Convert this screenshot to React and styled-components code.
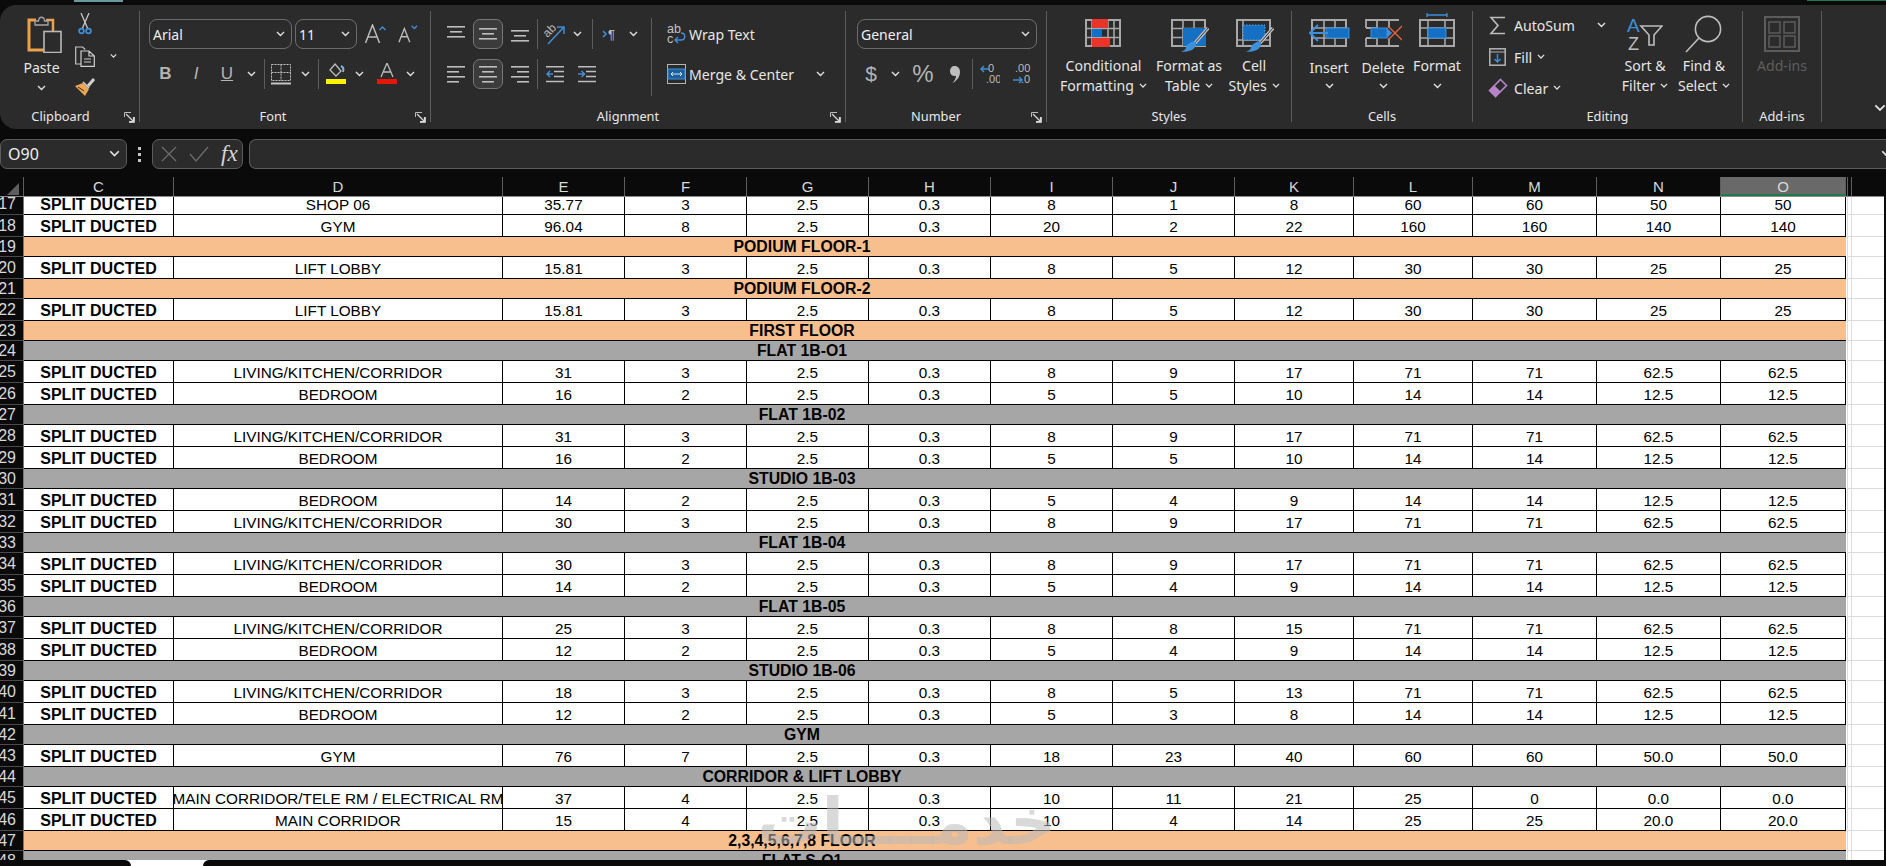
import React from 'react';
import styled, { createGlobalStyle } from 'styled-components';

const UI_FONT = '"Noto Sans", "Open Sans", sans-serif';
const SHEET_FONT = '"Liberation Sans", Arial, sans-serif';
const BLUE = '#3f8fd9';
const LINE = '#b4b4b4';

const GlobalStyle = createGlobalStyle`
  html, body { margin: 0; padding: 0; background: #0a0a0a; overflow: hidden; }
  #root { height: 866px; }
`;

const Page = styled.div`
  position: relative;
  width: 1886px;
  height: 866px;
  display: flex;
  flex-direction: column;
  overflow: hidden;
  background: #0a0a0a;
  font-family: ${UI_FONT};
`;

const TopEdge = styled.div`
  flex: 0 0 5px;
  display: flex;
  justify-content: space-between;
  align-items: flex-start;
`;

const TabMark = styled.div`
  width: 49px;
  height: 2px;
  margin-left: 74px;
  background: #6a9aa0;
`;

const TitleMark = styled.div`
  width: 79px;
  height: 1px;
  background: #1f7a4d;
`;

/* ---------- ribbon ---------- */

const Ribbon = styled.div`
  display: flex;
  flex: none;
  height: 124px;
  padding-top: 6px;
  box-sizing: border-box;
  background: #2b2b2b;
  border-radius: 16px 0 0 16px;
`;

const Group = styled.section`
  position: relative;
  flex: ${p => (p.$w ? `0 0 ${p.$w}px` : '1')};
  height: 111px;
  box-sizing: border-box;
  display: flex;
  flex-direction: column;
  border-right: ${p => (p.$w ? '1px solid #5c5c5c' : 'none')};
`;

const GroupBody = styled.div`
  height: 98px;
  box-sizing: border-box;
  display: flex;
  padding: ${p => p.$top ?? 8}px 0 0 ${p => p.$left ?? 0}px;
`;

const GroupLabel = styled.div`
  height: 14px;
  line-height: 16px;
  padding-right: ${p => p.$pr ?? 0}px;
  text-align: center;
  font-size: 12.8px;
  color: #e8e8e8;
`;

const CollapseMark = styled.div`
  display: flex;
  justify-content: flex-end;
  margin-top: -5px;
`;

const Launcher = styled.svg`
  position: absolute;
  right: 4px;
  bottom: -1px;
`;

const Rows = styled.div`
  display: flex;
  flex-direction: column;
  gap: 10px;
  width: ${p => (p.$w ? `${p.$w}px` : 'auto')};
`;

const ToolRow = styled.div`
  display: flex;
  align-items: center;
  height: 30px;
`;

const Slot = styled.div`
  flex: 0 0 ${p => p.$w}px;
  display: flex;
  align-items: center;
  justify-content: center;
  font-family: ${SHEET_FONT};
  color: ${LINE};
  font-size: ${p => p.$size ?? 16}px;
  font-weight: ${p => (p.$bold ? 700 : 400)};
  font-style: ${p => (p.$italic ? 'italic' : 'normal')};
  text-decoration: ${p => (p.$under ? 'underline' : 'none')};
`;

const PressedSlot = styled(Slot)`
  height: 30px;
  box-sizing: border-box;
  border: 1px solid #777;
  border-radius: 7px;
  background: #3b3b3b;
`;

const Gap = styled.div`
  flex: 0 0 ${p => p.$w}px;
`;

const ToolSep = styled.div`
  flex: 0 0 1px;
  height: 30px;
  background: #5c5c5c;
`;

const TallSep = styled.div`
  flex: 0 0 1px;
  height: 78px;
  margin-top: -1px;
  background: #5c5c5c;
`;

const Select = styled.div`
  width: ${p => p.$w}px;
  height: 30px;
  box-sizing: border-box;
  display: flex;
  align-items: center;
  justify-content: space-between;
  padding: 0 6px 0 3px;
  border: 1px solid #6c6c6c;
  border-radius: 8px;
  font-size: 14px;
  color: #efefef;
`;

const Caption = styled.span`
  font-size: 14.1px;
  color: ${p => (p.$off ? '#5e5e5e' : '#e6e6e6')};
  white-space: nowrap;
`;

const TextTool = styled.div`
  display: flex;
  align-items: center;
  height: ${p => p.$h ?? 30}px;
`;

const ToolIcon = styled.div`
  flex: 0 0 ${p => p.$w}px;
  display: flex;
  align-items: center;
  justify-content: center;
  margin-right: ${p => p.$mr ?? 0}px;
`;

const ChevronGap = styled.span`
  display: inline-flex;
  margin-left: ${p => p.$ml ?? 5}px;
`;

const BigButton = styled.div`
  flex: 0 0 ${p => p.$w}px;
  display: flex;
  flex-direction: column;
  align-items: center;
`;

const IconBox = styled.div`
  height: ${p => p.$h ?? 37}px;
  display: flex;
  align-items: ${p => (p.$center ? 'center' : 'flex-start')};
  justify-content: center;
  margin-left: ${p => p.$shift ?? 0}px;
`;

const LiftedIcon = styled.div`
  margin-top: -6px;
`;

const BigLine = styled.div`
  height: 20px;
  line-height: 20px;
  display: flex;
  align-items: center;
  margin-top: ${p => p.$drop ?? 0}px;
`;

const SmallTools = styled.div`
  display: flex;
  flex-direction: column;
  width: ${p => p.$w}px;
`;

/* ---------- formula bar ---------- */

const FormulaBar = styled.div`
  display: flex;
  align-items: stretch;
  flex: none;
  height: 30px;
  margin-top: 10px;
`;

const NameBox = styled.div`
  flex: 0 0 127px;
  box-sizing: border-box;
  display: flex;
  align-items: center;
  justify-content: space-between;
  padding: 0 6px 0 7px;
  background: #2b2b2b;
  border: 1px solid #5c5c5c;
  border-radius: 7px;
  font-size: 16px;
  color: #f0f0f0;
`;

const Dots = styled.div`
  flex: 0 0 25px;
  display: flex;
  flex-direction: column;
  align-items: center;
  justify-content: center;
  gap: 3px;
  i { width: 3px; height: 3px; background: #c4c4c4; }
`;

const FxBox = styled.div`
  flex: 0 0 91px;
  box-sizing: border-box;
  display: flex;
  align-items: center;
  gap: 12px;
  padding-left: 8px;
  background: #2b2b2b;
  border: 1px solid #5c5c5c;
  border-radius: 7px;
`;

const FxText = styled.span`
  font-family: "Liberation Serif", serif;
  font-style: italic;
  font-size: 23px;
  line-height: 26px;
  color: #d4d4d4;
`;

const FormulaInput = styled.div`
  flex: 1;
  margin-left: 6px;
  box-sizing: border-box;
  display: flex;
  align-items: center;
  justify-content: flex-end;
  background: #2b2b2b;
  border: 1px solid #5c5c5c;
  border-right: none;
  border-radius: 7px 0 0 7px;
  svg { margin-right: -6px; }
`;

/* ---------- sheet ---------- */

const COLUMNS = '24px 150px 329px 122px 122px 122px 122px 122px 122px 119px 119px 124px 124px 125px 6px 32px';

const HeaderRow = styled.div`
  display: grid;
  grid-template-columns: ${COLUMNS};
  height: 20px;
  margin-top: 8px;
  width: 1884px;
  box-sizing: border-box;
  border-bottom: 1px solid #8c8c8c;
  flex: none;
  font-family: ${SHEET_FONT};
  font-size: 15px;
  color: #d8d8d8;
`;

const ColHead = styled.div`
  display: flex;
  align-items: center;
  justify-content: center;
  line-height: 19px;
  box-sizing: border-box;
  border-right: 1px solid #5e5e5e;
  background: ${p => (p.$on ? '#696969' : 'transparent')};
  box-shadow: ${p => (p.$on ? 'inset 0 -2px 0 #1f7a4d' : 'none')};
`;

const GutterHead = styled.div`
  margin-left: 1px;
  border-left: 1px solid #5e5e5e;
  border-right: 1px solid #5e5e5e;
`;

const CornerHead = styled(ColHead)`
  align-items: flex-end;
  justify-content: flex-end;
  padding: 0 4px 1px 0;
`;

const Sheet = styled.div`
  flex: 1;
  min-height: 0;
  overflow: hidden;
  width: 1884px;
`;

const RowList = styled.div`
  margin-top: -4px;
  font-family: ${SHEET_FONT};
  font-size: 15.3px;
  color: #000;
`;

const SheetRow = styled.div`
  display: grid;
  grid-template-columns: ${COLUMNS};
  height: ${p => (p.$band ? 20 : 22)}px;
  background: #fff;
`;

const RowHead = styled.div`
  display: flex;
  align-items: center;
  justify-content: flex-end;
  padding-right: 7px;
  box-sizing: border-box;
  overflow: hidden;
  background: #0a0a0a;
  border-right: 1px solid #777;
  border-bottom: 1px solid #4a4a4a;
  color: #d8d8d8;
  font-size: 16px;
`;

const Cell = styled.div`
  display: flex;
  align-items: center;
  justify-content: center;
  overflow: hidden;
  white-space: nowrap;
  box-sizing: border-box;
  padding-top: 2px;
  background: #fff;
  border-right: 1px solid #000;
  border-bottom: 1px solid #000;
  font-weight: ${p => (p.$bold ? 700 : 400)};
  font-size: ${p => (p.$bold ? '16px' : 'inherit')};
  span { flex: none; }
`;

const Band = styled.div`
  grid-column: 2 / span 13;
  display: flex;
  align-items: center;
  justify-content: center;
  padding-right: 266px;
  box-sizing: border-box;
  font-size: 15.8px;
  font-weight: 700;
  background: ${p => (p.$tone === 'orange' ? '#f8bf8e' : '#a6a6a6')};
  border-bottom: 1px solid #000;
`;

const Gutter = styled.div`
  background: #fff;
  border-bottom: 1px solid #dcdcdc;
  margin-left: ${p => (p.$ruled ? '1px' : '0')};
  border-right: ${p => (p.$ruled ? '1px solid #dcdcdc' : 'none')};
  border-left: ${p => (p.$ruled ? '1px solid #dcdcdc' : 'none')};
`;

const Watermark = styled.div`
  position: absolute;
  left: 820px;
  top: 782px;
  width: 236px;
  text-align: center;
  direction: rtl;
  font-family: "DejaVu Sans", sans-serif;
  font-weight: 700;
  font-size: 64px;
  line-height: 80px;
  color: rgba(185, 185, 185, 0.55);
  white-space: nowrap;
  pointer-events: none;
`;

const BottomEdge = styled.div`
  flex: 0 0 6px;
  display: flex;
  justify-content: space-between;
  background: #fff;
`;

const EdgeBlock = styled.div`
  height: 6px;
  background: #0a0a0a;
  width: ${p => (p.$left ? '131px' : '1683px')};
  border-radius: ${p => (p.$left ? '0 6px 0 0' : '6px 0 0 0')};
`;

/* ---------- icons ---------- */

const Chevron = ({ color = '#e0e0e0', w = 9 }) => (
  <svg width={w} height={w * 0.67} viewBox="0 0 9 6"><path d="M1 1l3.5 3.5L8 1" fill="none" stroke={color} strokeWidth="1.4" /></svg>
);

const LauncherIcon = () => (
  <Launcher width="11" height="11" viewBox="0 0 11 11">
    <path d="M10.5 5v5.5H5M.5 5V.5H7" fill="none" stroke="#bdbdbd" />
    <path d="M2 2l7 7M5 9.5h4.5V5" fill="none" stroke="#d8d8d8" strokeWidth="1.2" />
  </Launcher>
);

const PasteIcon = () => (
  <svg width="35" height="38" viewBox="0 0 35 38">
    <path d="M9 5H2v30h16" fill="none" stroke="#eba24d" strokeWidth="3" />
    <path d="M19 5h7v11" fill="none" stroke="#eba24d" strokeWidth="2.5" />
    <path d="M8 6h3.5c.5-5 5.5-5 6 0H21v4H8z" fill="#2b2b2b" stroke="#a6a6a6" strokeWidth="1.3" />
    <rect x="17" y="16.5" width="17" height="21" fill="#2b2b2b" stroke="#b8b8b8" strokeWidth="1.6" />
  </svg>
);

const ScissorsIcon = () => (
  <svg width="14" height="22" viewBox="0 0 14 22">
    <path d="M3 0l6.5 15M11 0L4.5 15" stroke="#c8c8c8" strokeWidth="1.3" fill="none" />
    <circle cx="3.5" cy="18" r="2.4" fill="none" stroke={BLUE} strokeWidth="1.7" />
    <circle cx="10.5" cy="18" r="2.4" fill="none" stroke={BLUE} strokeWidth="1.7" />
  </svg>
);

const CopyIcon = () => (
  <svg width="20" height="21" viewBox="0 0 20 21">
    <path d="M6 18H.7V1h7l2.5 2.5" fill="none" stroke="#c4c4c4" strokeWidth="1.2" />
    <path d="M6 5h8l5.3 5v10.3H6zM14 5v5h5M9 13h7M9 16h7" fill="none" stroke="#cfcfcf" strokeWidth="1.2" />
  </svg>
);

const BrushIcon = () => (
  <svg width="21" height="20" viewBox="0 0 21 20">
    <path d="M0 9l8-3 6 6-4 7z" fill="#eda654" />
    <path d="M13 9l6-7" stroke="#d0d0d0" strokeWidth="3" fill="none" />
    <path d="M8 5l6 6" stroke="#d0d0d0" strokeWidth="1.6" fill="none" />
    <path d="M3 10l6 4" stroke="#2b2b2b" />
  </svg>
);

const GrowIcon = ({ up }) => (
  <svg width={up ? 22 : 20} height="20" viewBox="0 0 22 20">
    <path d={up ? 'M.5 19L7.5 1l7 18M3 13h9' : 'M1 19L7 4l6 15M3.5 13h7'} fill="none" stroke="#bcbcbc" strokeWidth="1.5" />
    <path d={up ? 'M14.5 6l3-3 3 3' : 'M15 1l3 3 3-3'} fill="none" stroke={BLUE} strokeWidth="1.4" />
  </svg>
);

const BordersIcon = () => (
  <svg width="20" height="21" viewBox="0 0 20 21">
    <path d="M.5.5h19v16H.5zM10 .5v16M.5 8.5h19" fill="none" stroke="#c4c4c4" strokeDasharray="2 1" />
    <path d="M0 19.5h20" stroke="#c4c4c4" strokeWidth="2" />
  </svg>
);

const FillIcon = () => (
  <svg width="20" height="22" viewBox="0 0 20 22">
    <path d="M9 1l6 7-5 5-6-6z" fill="none" stroke="#bdbdbd" strokeWidth="1.3" />
    <path d="M15 3c2 1 3 3 2 6" fill="none" stroke="#7fb4dd" strokeWidth="2" />
    <rect y="16" width="20" height="5" fill="#fff200" />
  </svg>
);

const FontColorIcon = () => (
  <svg width="20" height="22" viewBox="0 0 20 22">
    <path d="M4 14L10 0l6 14M6 9h8" fill="none" stroke="#bdbdbd" strokeWidth="1.3" />
    <rect y="16" width="20" height="5" fill="#e3170a" />
  </svg>
);

const LinesIcon = ({ rows }) => (
  <svg width="18" height="18" viewBox="0 0 18 18">
    {rows.map(([x, y, w], i) => <rect key={i} x={x} y={y} width={w} height="1.6" fill="#bdbdbd" />)}
  </svg>
);

const VAlign = {
  top: [[0, 1, 18], [3, 6, 12], [0, 11, 18]],
  mid: [[0, 3, 18], [3, 8, 12], [0, 13, 18]],
  bot: [[0, 5, 18], [3, 10, 12], [0, 15, 18]],
};
const HAlign = {
  left: [[0, 1, 18], [0, 6, 12], [0, 11, 18], [0, 16, 12]],
  center: [[0, 1, 18], [3, 6, 12], [0, 11, 18], [3, 16, 12]],
  right: [[0, 1, 18], [6, 6, 12], [0, 11, 18], [6, 16, 12]],
};

const OrientIcon = () => (
  <svg width="22" height="22" viewBox="0 0 22 22">
    <text x="0" y="12" transform="rotate(-45 6 8)" fontSize="12" fontFamily={SHEET_FONT} fill="#bdbdbd">ab</text>
    <path d="M5 21L20 5M14 4h7v7" fill="none" stroke={BLUE} strokeWidth="1.5" />
  </svg>
);

const TextDirIcon = () => (
  <svg width="17" height="14" viewBox="0 0 17 14">
    <path d="M1 4l3 3-3 3" fill="none" stroke={BLUE} strokeWidth="1.5" />
    <text x="6" y="12" fontSize="13" fontFamily={SHEET_FONT} fill="#bdbdbd">¶</text>
  </svg>
);

const IndentIcon = ({ out }) => (
  <svg width="18" height="18" viewBox="0 0 18 18">
    <path d="M0 1.7h18M8 6.5h10M8 11.5h10M0 16.5h18" stroke="#bdbdbd" strokeWidth="1.5" />
    <path d={out ? 'M7 9H1M4 6L1 9l3 3' : 'M0 9h6M3.5 6L6.5 9l-3 3'} fill="none" stroke={BLUE} strokeWidth="1.5" />
  </svg>
);

const WrapIcon = () => (
  <svg width="19" height="21" viewBox="0 0 19 21">
    <text x="0" y="9" fontSize="12.5" fontFamily={SHEET_FONT} fill="#c4c4c4">ab</text>
    <text x="0" y="19" fontSize="12.5" fontFamily={SHEET_FONT} fill="#c4c4c4">c</text>
    <path d="M14 9c5 0 5 7 0 7H8M11 13l-3 3 3 3" fill="none" stroke={BLUE} strokeWidth="1.4" />
  </svg>
);

const MergeIcon = () => (
  <svg width="19" height="20" viewBox="0 0 19 20">
    <rect x=".5" y=".5" width="18" height="19" fill="none" stroke="#b4b4b4" />
    <rect x="1" y="5" width="17" height="10" fill="#1c5f9f" stroke={BLUE} />
    <path d="M4 10h11M6 8l-2 2 2 2M13 8l2 2-2 2" fill="none" stroke="#d5e8f7" />
  </svg>
);

const CommaIcon = () => (
  <svg width="10" height="17" viewBox="0 0 10 17">
    <path d="M4.5 0C8 0 10 2.5 10 6c0 4.5-3 9-7.5 11C5 14 6 12 6 10 2.5 10.5 0 8.5 0 5.5 0 2 2 0 4.5 0z" fill="#bdbdbd" />
  </svg>
);

const DecimalIcon = ({ more }) => (
  <svg width="20" height="24" viewBox="0 0 20 24">
    <text x={more ? 8 : 3} y="10" fontSize="11" fontFamily={SHEET_FONT} fill="#bdbdbd">{more ? '0' : '.00'}</text>
    <text x={more ? 6 : 9} y="21" fontSize="11" fontFamily={SHEET_FONT} fill="#bdbdbd">{more ? '.00' : '.0'}</text>
    <path d={more ? 'M9 7H1M4 4L1 7l3 3' : 'M1 18h9M7 15l3 3-3 3'} fill="none" stroke={BLUE} strokeWidth="1.4" />
  </svg>
);

const Grid = ({ w, h, x = [], y = [], color = '#a8a8a8' }) => (
  <>
    <rect x="1" y="1" width={w - 2} height={h - 2} fill="none" stroke={color} strokeWidth="2" />
    {x.map(v => <path key={`x${v}`} d={`M${v} 1v${h - 2}`} stroke={color} strokeWidth="1.6" />)}
    {y.map(v => <path key={`y${v}`} d={`M1 ${v}h${w - 2}`} stroke={color} strokeWidth="1.6" />)}
  </>
);

const CondIcon = () => (
  <svg width="36" height="28" viewBox="0 0 36 28">
    <Grid w={36} h={28} x={[7, 23, 29]} y={[9.5, 18.5]} />
    <rect x="7" y="0" width="16" height="9" fill="#e8352c" />
    <rect x="7" y="10" width="10" height="8" fill="#1570c4" />
    <rect x="7" y="19" width="18" height="9" fill="#e8352c" />
  </svg>
);

const PaintBrush = () => (
  <>
    <path d="M37 9L24 24" stroke="#c4c4c4" strokeWidth="3.4" fill="none" />
    <path d="M37 9L24 24" stroke="#2b2b2b" strokeWidth="1" fill="none" />
    <path d="M19 24c3-2 6-2 6 1 0 5-6 8-15 8 4-2 5-3 5-5 0-2 2-3 4-4z" fill={BLUE} />
  </>
);

const TableStyleIcon = () => (
  <svg width="38" height="34" viewBox="0 0 38 34">
    <Grid w={35} h={28} x={[12, 23]} y={[9.5, 18.5]} />
    <rect x="12" y="9" width="23" height="18" fill="#1570c4" />
    <PaintBrush />
  </svg>
);

const CellStyleIcon = () => (
  <svg width="38" height="34" viewBox="0 0 38 34">
    <Grid w={35} h={28} x={[7]} y={[21]} />
    <rect x="7" y="6" width="22" height="15" fill="#1570c4" stroke="#5aa7e6" strokeDasharray="1.5 1.5" />
    <PaintBrush />
  </svg>
);

const InsertCellsIcon = () => (
  <svg width="41" height="28" viewBox="0 0 41 28">
    <g transform="translate(2 0)"><Grid w={36} h={28} x={[13, 24]} y={[9, 19]} /></g>
    <rect x="17" y="9" width="23" height="10" fill="#1570c4" stroke={BLUE} />
    <path d="M19 14H1M9 6l-8 8 8 8" fill="none" stroke={BLUE} strokeWidth="2" />
  </svg>
);

const DeleteCellsIcon = () => (
  <svg width="37" height="28" viewBox="0 0 37 28">
    <path d="M34 1H1v8M1 19v8h33M12 1v8M24 1v8M12 19v8M24 19v8M1 9h10M1 19h10" fill="none" stroke="#a8a8a8" strokeWidth="1.8" />
    <rect x="6" y="9" width="16" height="10" fill="#1570c4" stroke={BLUE} />
    <path d="M22 9l5 5-5 5" fill={BLUE} />
    <path d="M23 7l14 14M37 7L23 21" stroke="#e8643c" strokeWidth="1.4" />
  </svg>
);

const FormatCellsIcon = () => (
  <svg width="36" height="34" viewBox="0 0 36 34">
    <path d="M8 2h20M8 0v4M28 0v4" stroke={BLUE} strokeWidth="1.3" fill="none" />
    <g transform="translate(0 6)"><Grid w={36} h={28} x={[9, 26]} y={[9, 19]} /></g>
    <rect x="9" y="15" width="18" height="10" fill="#1570c4" stroke={BLUE} />
  </svg>
);

const SigmaIcon = () => (
  <svg width="17" height="19" viewBox="0 0 17 19">
    <path d="M16 1.5H2L9 9.5l-7 8h14" fill="none" stroke="#bdbdbd" strokeWidth="1.6" />
  </svg>
);

const FillDownIcon = () => (
  <svg width="17" height="18" viewBox="0 0 17 18">
    <rect x=".8" y=".8" width="15.4" height="16.4" fill="none" stroke="#b4b4b4" strokeWidth="1.5" />
    <path d="M1 4h15" stroke="#b4b4b4" />
    <path d="M8.5 6v8M5.5 11l3 3 3-3" fill="none" stroke={BLUE} strokeWidth="1.4" />
  </svg>
);

const EraserIcon = () => (
  <svg width="20" height="20" viewBox="0 0 20 20">
    <path d="M12.5 1.5l6 6-11 11-6-6z" fill="none" stroke="#b884c8" strokeWidth="1.6" />
    <path d="M1.5 12.5l5-5 6 6-5 5z" fill="#b884c8" />
  </svg>
);

const SortIcon = () => (
  <svg width="36" height="34" viewBox="0 0 36 34">
    <text x="0" y="15" fontSize="19" fontFamily={SHEET_FONT} fill={BLUE}>A</text>
    <text x="1" y="33" fontSize="18" fontFamily={SHEET_FONT} fill="#bdbdbd">Z</text>
    <path d="M14 9h21l-8 9v10h-5V18z" fill="none" stroke="#bdbdbd" strokeWidth="1.6" />
  </svg>
);

const FindIcon = () => (
  <svg width="38" height="38" viewBox="0 0 38 38">
    <circle cx="23" cy="14" r="12.6" fill="none" stroke="#bdbdbd" strokeWidth="1.6" />
    <path d="M14 23L1 37" stroke="#bdbdbd" strokeWidth="1.6" />
  </svg>
);

const AddinsIcon = () => (
  <svg width="36" height="36" viewBox="0 0 36 36">
    <rect x="1" y="1" width="34" height="34" fill="none" stroke="#5c5c5c" strokeWidth="2" />
    <path d="M5 6h11v11H5zM20 6h11v11H20zM5 20h11v11H5zM20 20h11v11H20z" fill="none" stroke="#5c5c5c" strokeWidth="1.5" />
  </svg>
);

const CrossIcon = () => (
  <svg width="16" height="16" viewBox="0 0 16 16"><path d="M1 1l14 14M15 1L1 15" stroke="#6c6c6c" strokeWidth="1.3" /></svg>
);

const CheckIcon = () => (
  <svg width="20" height="16" viewBox="0 0 20 16"><path d="M1 8l6 7L19 1" fill="none" stroke="#6c6c6c" strokeWidth="1.3" /></svg>
);

/* ---------- data ---------- */

const COL_HEADS = ['C', 'D', 'E', 'F', 'G', 'H', 'I', 'J', 'K', 'L', 'M', 'N', 'O'];

const LIVING = 'LIVING/KITCHEN/CORRIDOR';
const band = (title, tone = 'grey') => ({ title, tone });
const flat = (room, area, n, a, b, c) => ({ room, rest: [area, n, '2.5', '0.3', ...a, ...b, ...c] });
const LIVING_TAIL = [['71', '71'], ['62.5', '62.5']];
const BED_TAIL = [['14', '14'], ['12.5', '12.5']];

const SHEET = [
  flat('SHOP 06', '35.77', '3', ['8', '1', '8'], ['60', '60'], ['50', '50']),
  flat('GYM', '96.04', '8', ['20', '2', '22'], ['160', '160'], ['140', '140']),
  band('PODIUM FLOOR-1', 'orange'),
  flat('LIFT LOBBY', '15.81', '3', ['8', '5', '12'], ['30', '30'], ['25', '25']),
  band('PODIUM FLOOR-2', 'orange'),
  flat('LIFT LOBBY', '15.81', '3', ['8', '5', '12'], ['30', '30'], ['25', '25']),
  band('FIRST FLOOR', 'orange'),
  band('FLAT 1B-O1'),
  flat(LIVING, '31', '3', ['8', '9', '17'], ...LIVING_TAIL),
  flat('BEDROOM', '16', '2', ['5', '5', '10'], ...BED_TAIL),
  band('FLAT 1B-02'),
  flat(LIVING, '31', '3', ['8', '9', '17'], ...LIVING_TAIL),
  flat('BEDROOM', '16', '2', ['5', '5', '10'], ...BED_TAIL),
  band('STUDIO 1B-03'),
  flat('BEDROOM', '14', '2', ['5', '4', '9'], ...BED_TAIL),
  flat(LIVING, '30', '3', ['8', '9', '17'], ...LIVING_TAIL),
  band('FLAT 1B-04'),
  flat(LIVING, '30', '3', ['8', '9', '17'], ...LIVING_TAIL),
  flat('BEDROOM', '14', '2', ['5', '4', '9'], ...BED_TAIL),
  band('FLAT 1B-05'),
  flat(LIVING, '25', '3', ['8', '8', '15'], ...LIVING_TAIL),
  flat('BEDROOM', '12', '2', ['5', '4', '9'], ...BED_TAIL),
  band('STUDIO 1B-06'),
  flat(LIVING, '18', '3', ['8', '5', '13'], ...LIVING_TAIL),
  flat('BEDROOM', '12', '2', ['5', '3', '8'], ...BED_TAIL),
  band('GYM'),
  flat('GYM', '76', '7', ['18', '23', '40'], ['60', '60'], ['50.0', '50.0']),
  band('CORRIDOR & LIFT LOBBY'),
  flat('MAIN CORRIDOR/TELE RM / ELECTRICAL RM', '37', '4', ['10', '11', '21'], ['25', '0'], ['0.0', '0.0']),
  flat('MAIN CORRIDOR', '15', '4', ['10', '4', '14'], ['25', '25'], ['20.0', '20.0']),
  band('2,3,4,5,6,7,8 FLOOR', 'orange'),
  band('FLAT S-O1'),
];

const Big = ({ w, icon, lines, boxH, center, shift, drop, chevronBelow, off }) => (
  <BigButton $w={w}>
    <IconBox $h={boxH} $center={center} $shift={shift}>{icon}</IconBox>
    {lines.map((line, i) => (
      <BigLine key={line} $drop={i === 0 ? drop : 0}>
        <Caption $off={off}>{line}</Caption>
        {!chevronBelow && !off && i === lines.length - 1 && <ChevronGap><Chevron w={8} /></ChevronGap>}
      </BigLine>
    ))}
    {chevronBelow && <BigLine $drop={drop ? -2 : 0}><Chevron /></BigLine>}
  </BigButton>
);

export default function App() {
  return (
    <Page>
      <GlobalStyle />
      <TopEdge><TabMark /><TitleMark /></TopEdge>
      <Ribbon>
        <Group $w={140}>
          <GroupBody $top={4} $left={21}>
            <BigButton $w={40}>
              <IconBox $h={43} $shift={6}><PasteIcon /></IconBox>
              <BigLine><Caption>Paste</Caption></BigLine>
              <BigLine><Chevron /></BigLine>
            </BigButton>
            <Gap $w={9} />
            <SmallTools $w={46}>
              <TextTool $h={18}><ToolIcon $w={28}><ScissorsIcon /></ToolIcon></TextTool>
              <TextTool $h={46}><ToolIcon $w={28} $mr={11}><CopyIcon /></ToolIcon><Chevron /></TextTool>
              <TextTool $h={16}><ToolIcon $w={28}><BrushIcon /></ToolIcon></TextTool>
            </SmallTools>
          </GroupBody>
          <GroupLabel $pr={18}>Clipboard</GroupLabel>
          <LauncherIcon />
        </Group>

        <Group $w={291}>
          <GroupBody $left={9}>
            <Rows>
              <ToolRow>
                <Select $w={143}>Arial<Chevron /></Select>
                <Gap $w={3} />
                <Select $w={62}>11<Chevron /></Select>
                <Gap $w={6} />
                <Slot $w={26}><GrowIcon up /></Slot>
                <Gap $w={8} />
                <Slot $w={22}><GrowIcon /></Slot>
              </ToolRow>
              <ToolRow>
                <Slot $w={33} $bold $size={17}>B</Slot>
                <Slot $w={28} $italic $size={17}>I</Slot>
                <Slot $w={34} $under $size={17}>U</Slot>
                <Slot $w={14}><Chevron /></Slot>
                <Gap $w={6} />
                <ToolSep />
                <Slot $w={32}><BordersIcon /></Slot>
                <Slot $w={16}><Chevron /></Slot>
                <Gap $w={5} />
                <ToolSep />
                <Slot $w={34}><FillIcon /></Slot>
                <Slot $w={12}><Chevron /></Slot>
                <Gap $w={8} />
                <Slot $w={28}><FontColorIcon /></Slot>
                <Slot $w={18}><Chevron /></Slot>
              </ToolRow>
            </Rows>
          </GroupBody>
          <GroupLabel $pr={24}>Font</GroupLabel>
          <LauncherIcon />
        </Group>

        <Group $w={415}>
          <GroupBody $left={12}>
            <Rows $w={208}>
              <ToolRow>
                <Slot $w={26}><LinesIcon rows={VAlign.top} /></Slot>
                <Gap $w={4} />
                <PressedSlot $w={30}><LinesIcon rows={VAlign.mid} /></PressedSlot>
                <Gap $w={4} />
                <Slot $w={26}><LinesIcon rows={VAlign.bot} /></Slot>
                <Gap $w={4} />
                <ToolSep />
                <Slot $w={32}><OrientIcon /></Slot>
                <Slot $w={14}><Chevron /></Slot>
                <Gap $w={8} />
                <ToolSep />
                <Slot $w={34}><TextDirIcon /></Slot>
                <Slot $w={12}><Chevron /></Slot>
              </ToolRow>
              <ToolRow>
                <Slot $w={26}><LinesIcon rows={HAlign.left} /></Slot>
                <Gap $w={4} />
                <PressedSlot $w={30}><LinesIcon rows={HAlign.center} /></PressedSlot>
                <Gap $w={4} />
                <Slot $w={26}><LinesIcon rows={HAlign.right} /></Slot>
                <Gap $w={4} />
                <ToolSep />
                <Slot $w={34}><IndentIcon out /></Slot>
                <Slot $w={30}><IndentIcon /></Slot>
              </ToolRow>
            </Rows>
            <TallSep />
            <Rows>
              <ToolRow>
                <Gap $w={14} />
                <ToolIcon $w={20} $mr={3}><WrapIcon /></ToolIcon>
                <Caption>Wrap Text</Caption>
              </ToolRow>
              <ToolRow>
                <Gap $w={14} />
                <ToolIcon $w={20} $mr={3}><MergeIcon /></ToolIcon>
                <Caption>Merge &amp; Center</Caption>
                <ChevronGap $ml={22}><Chevron /></ChevronGap>
              </ToolRow>
            </Rows>
          </GroupBody>
          <GroupLabel $pr={20}>Alignment</GroupLabel>
          <LauncherIcon />
        </Group>

        <Group $w={201}>
          <GroupBody $left={11}>
            <Rows>
              <ToolRow>
                <Select $w={180}>General<Chevron /></Select>
              </ToolRow>
              <ToolRow>
                <Slot $w={28} $size={21}>$</Slot>
                <Slot $w={20}><Chevron /></Slot>
                <Slot $w={36} $size={24}>%</Slot>
                <Slot $w={28}><CommaIcon /></Slot>
                <Gap $w={3} />
                <ToolSep />
                <Slot $w={34}><DecimalIcon more /></Slot>
                <Slot $w={30}><DecimalIcon /></Slot>
              </ToolRow>
            </Rows>
          </GroupBody>
          <GroupLabel $pr={20}>Number</GroupLabel>
          <LauncherIcon />
        </Group>

        <Group $w={245}>
          <GroupBody $left={13}>
            <Big w={86} icon={<CondIcon />} lines={['Conditional', 'Formatting']} />
            <Gap $w={9} />
            <Big w={66} icon={<TableStyleIcon />} shift={2} lines={['Format as', 'Table']} />
            <Gap $w={4} />
            <Big w={56} icon={<CellStyleIcon />} shift={2} lines={['Cell', 'Styles']} />
          </GroupBody>
          <GroupLabel>Styles</GroupLabel>
        </Group>

        <Group $w={181}>
          <GroupBody $left={10}>
            <Big w={54} icon={<InsertCellsIcon />} lines={['Insert']} drop={2} chevronBelow />
            <Big w={54} icon={<DeleteCellsIcon />} lines={['Delete']} drop={2} chevronBelow />
            <Big w={54} icon={<LiftedIcon><FormatCellsIcon /></LiftedIcon>} lines={['Format']} chevronBelow />
          </GroupBody>
          <GroupLabel>Cells</GroupLabel>
        </Group>

        <Group $w={270}>
          <GroupBody $top={0} $left={14}>
            <SmallTools $w={128}>
              <TextTool $h={28}>
                <ToolIcon $w={20} $mr={7}><SigmaIcon /></ToolIcon>
                <Caption>AutoSum</Caption>
                <ChevronGap $ml={22}><Chevron /></ChevronGap>
              </TextTool>
              <TextTool $h={36}>
                <ToolIcon $w={20} $mr={7}><FillDownIcon /></ToolIcon>
                <Caption>Fill</Caption>
                <ChevronGap><Chevron w={8} /></ChevronGap>
              </TextTool>
              <TextTool $h={26}>
                <ToolIcon $w={22} $mr={5}><EraserIcon /></ToolIcon>
                <Caption>Clear</Caption>
                <ChevronGap><Chevron w={8} /></ChevronGap>
              </TextTool>
            </SmallTools>
            <Big w={60} icon={<SortIcon />} boxH={45} center lines={['Sort &', 'Filter']} />
            <Big w={58} icon={<FindIcon />} boxH={45} center lines={['Find &', 'Select']} />
          </GroupBody>
          <GroupLabel>Editing</GroupLabel>
        </Group>

        <Group $w={78}>
          <GroupBody $top={0}>
            <Big w={78} icon={<AddinsIcon />} boxH={45} center off lines={['Add-ins']} />
          </GroupBody>
          <GroupLabel>Add-ins</GroupLabel>
        </Group>

        <Group>
          <GroupBody />
          <CollapseMark><Chevron w={12} /></CollapseMark>
        </Group>
      </Ribbon>

      <FormulaBar>
        <NameBox>O90<Chevron w={11} /></NameBox>
        <Dots><i /><i /><i /></Dots>
        <FxBox><CrossIcon /><CheckIcon /><FxText>fx</FxText></FxBox>
        <FormulaInput><Chevron w={11} /></FormulaInput>
      </FormulaBar>

      <HeaderRow>
        <CornerHead>
          <svg width="12" height="12" viewBox="0 0 12 12"><path d="M12 0v12H0z" fill="#5e5e5e" /></svg>
        </CornerHead>
        {COL_HEADS.map(c => <ColHead key={c} $on={c === 'O'}>{c}</ColHead>)}
        <GutterHead />
        <div />
      </HeaderRow>

      <Sheet>
        <RowList>
          {SHEET.map((row, i) => (
            <SheetRow key={i} $band={!!row.title}>
              <RowHead>{17 + i}</RowHead>
              {row.title ? (
                <Band $tone={row.tone}>{row.title}</Band>
              ) : (
                <>
                  <Cell $bold><span>SPLIT DUCTED</span></Cell>
                  <Cell><span>{row.room}</span></Cell>
                  {row.rest.map((v, j) => <Cell key={j}><span>{v}</span></Cell>)}
                </>
              )}
              <Gutter $ruled />
              <Gutter />
            </SheetRow>
          ))}
        </RowList>
      </Sheet>

      <BottomEdge>
        <EdgeBlock $left />
        <EdgeBlock />
      </BottomEdge>

      <Watermark>خدمــــات</Watermark>
    </Page>
  );
}
